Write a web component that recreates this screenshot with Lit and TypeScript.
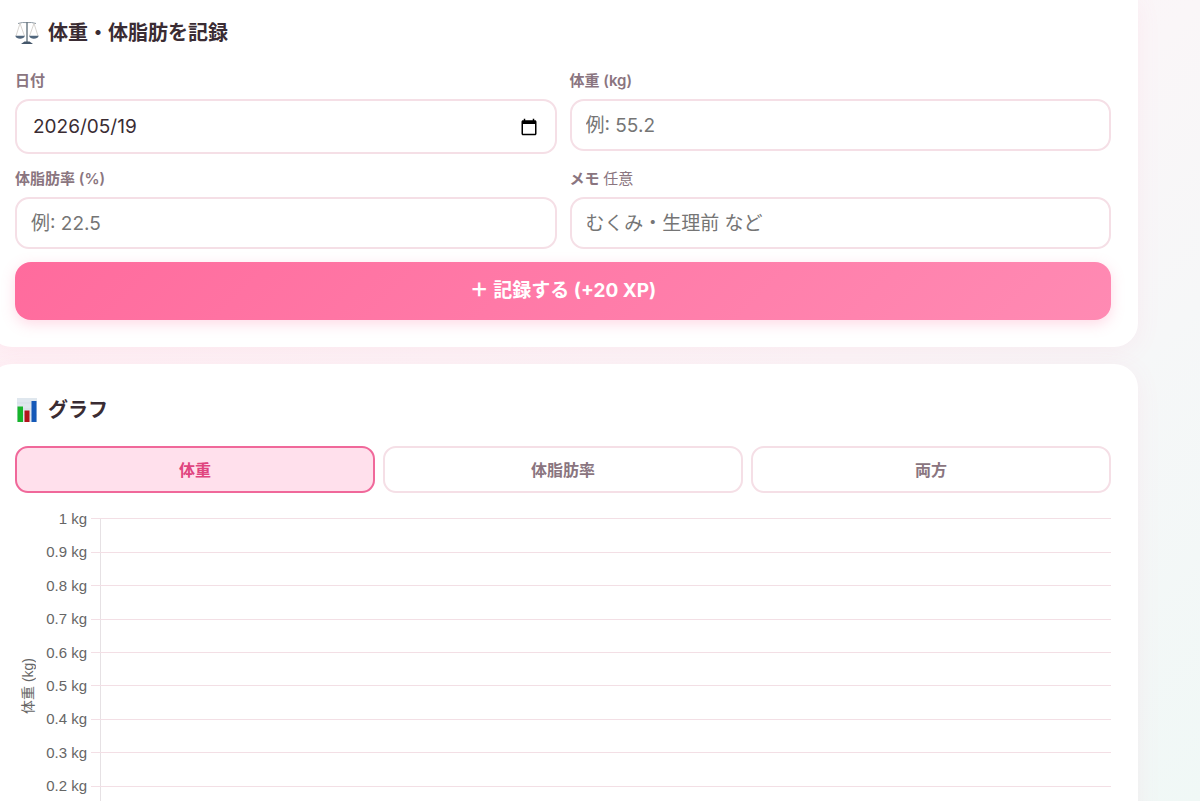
import { LitElement, html, svg, css } from "lit";
import { customElement, state } from "lit/decorators.js";

const scalesIcon = svg`
  <svg class="emoji" viewBox="0 0 24 24" fill="none" aria-hidden="true">
    <path d="M3 2.5 Q7.5 1 12 1.6 Q16.5 1 21 2.5" stroke="#8d99a3" stroke-width="1"/>
    <path d="M12 1v20" stroke="#66757f" stroke-width="1.4"/>
    <path d="M5 2.4L1 15M5 2.4L9.500 15M19 2.4L14.5 15M19 2.4L23 15" stroke="#c6c1bb" stroke-width=".7"/>
    <path d="M.3 14.8h9.600c-.6 2.200-2.500 3-4.800 3s-4.200-.8-4.800-3zM14.100 14.800h9.600c-.6 2.200-2.500 3-4.800 3s-4.200-.8-4.800-3z" fill="#52677d"/>
    <path d="M9.5 20.5h5l3.500 2.500H6z" fill="#44566a"/>
  </svg>`;

const chartIcon = svg`
  <svg class="emoji" viewBox="0 0 24 24" aria-hidden="true">
    <rect x="2" y="0" width="20" height="24" fill="#dfe7ee"/>
    <path d="M2 5h20M2 11h20M2 17h20" stroke="#cdd8e2" stroke-width=".6"/>
    <rect x="2.500" y="8.500" width="5.500" height="15.500" fill="#17b52c"/>
    <rect x="9.500" y="12.500" width="5" height="11.500" fill="#b3141c"/>
    <rect x="16.500" y="3" width="5" height="21" fill="#1559b8"/>
  </svg>`;

@customElement("app-root")
export class AppRoot extends LitElement {
  @state() private view = "weight";

  private tabs = [
    { id: "weight", label: "体重" },
    { id: "fat", label: "体脂肪率" },
    { id: "both", label: "両方" },
  ];

  private ticks = ["1", "0.9", "0.8", "0.7", "0.6", "0.5", "0.4", "0.3", "0.2"];

  static styles = css`
    :host {
      display: block;
      height: 100vh;
      overflow: hidden;
      box-sizing: border-box;
      color: #3a2c33;
      font-family: Inter, "Noto Sans CJK JP", sans-serif;
      background: linear-gradient(135deg, #fff0f5 0%, #faf6f8 60%, #f6f7f8 75%, #f0f8f6 100%);
    }
    *, *::before, *::after { box-sizing: border-box; }
    .page {
      display: flex;
      flex-direction: column;
      gap: 17px;
      margin: 0 62px 0 -12px;
    }
    .card {
      padding: 30px 27px 27px;
      background: #fff;
      border-radius: 24px;
      box-shadow: 0 4px 24px rgba(255, 107, 157, 0.08);
    }
    .entry { padding-top: 17px; border-radius: 0 0 24px 24px; }
    .title {
      display: flex;
      align-items: center;
      gap: 9px;
      margin: 0;
      font-size: 20px;
      line-height: 32px;
      font-weight: 700;
    }
    .emoji { width: 24px; height: 24px; flex: none; }
    .form {
      display: grid;
      grid-template-columns: 1fr 1fr;
      gap: 13px;
      align-items: start;
      margin-top: 20px;
    }
    .field { display: flex; flex-direction: column; gap: 6px; }
    .label { font-size: 15px; line-height: 24px; font-weight: 600; color: #8a7580; }
    .optional { font-weight: 400; }
    .input {
      width: 100%;
      height: 52px;
      padding: 0 14px;
      border: 2px solid #f5dfe6;
      border-radius: 14px;
      background: #fff;
      color: #3a2c33;
      font: 400 19px/24px Inter, "Noto Sans CJK JP", sans-serif;
      outline: none;
    }
    .input::placeholder { color: #757575; opacity: 1; }
    .date { display: flex; align-items: center; height: 55px; padding: 0 16px; }
    .date-text {
      flex: 1;
      min-width: 0;
      padding: 0;
      border: 0;
      background: none;
      color: inherit;
      font: inherit;
      outline: none;
    }
    .picker { display: flex; padding: 0; border: 0; background: none; color: #000; }
    .calendar { width: 20px; height: 18px; }
    .submit {
      grid-column: 1 / -1;
      height: 58px;
      border: 0;
      border-radius: 16px;
      background: linear-gradient(135deg, #ff6b9d, #ff8ab3);
      box-shadow: 0 4px 14px rgba(255, 107, 157, 0.25);
      color: #fff;
      font: 700 19px/24px Inter, "Noto Sans CJK JP", sans-serif;
    }
    .plus { font-weight: 900; }
    .tabs { display: grid; grid-template-columns: repeat(3, 1fr); gap: 8px; margin-top: 20px; }
    .tab {
      height: 47px;
      border: 2px solid #f5dfe6;
      border-radius: 13px;
      background: #fff;
      color: #8a7580;
      font: 600 16px/24px Inter, "Noto Sans CJK JP", sans-serif;
    }
    .tab[aria-pressed="true"] { border-color: #f0689a; background: #ffe0ec; color: #e0457f; }
    .chart {
      display: flex;
      height: 368px;
      margin-top: 9px;
      color: #666;
      font: 400 15px/20px "Liberation Sans", "Noto Sans CJK JP", sans-serif;
    }
    .axis-name {
      width: 26px;
      writing-mode: vertical-rl;
      text-orientation: sideways;
      transform: rotate(180deg);
      text-align: center;
      font-size: 14px;
      line-height: 26px;
    }
    .plot {
      flex: 1;
      display: grid;
      grid-template-rows: repeat(11, 1fr);
      background: linear-gradient(#e6e1e4, #e6e1e4) 59px 17px / 1px 334px no-repeat;
    }
    .row { display: grid; grid-template-columns: 46px 1fr; align-items: center; column-gap: 4px; }
    .tick { text-align: right; }
    .line { height: 1px; background: #f3dfe5; }
  `;

  render() {
    return html`
      <main class="page">
        <section class="card entry">
          <h2 class="title">${scalesIcon}<span>体重・体脂肪を記録</span></h2>
          <form class="form" @submit=${(e: Event) => e.preventDefault()}>
            <div class="field">
              <label class="label" for="date">日付</label>
              <div class="input date">
                <input class="date-text" id="date" type="text" value="2026/05/19" />
                <button class="picker" type="button" aria-label="日付を選択">
                  <svg class="calendar" viewBox="0 0 24 24" fill="currentColor" aria-hidden="true">
                    <path d="M20 3h-1V1h-2v2H7V1H5v2H4c-1.100 0-2 .9-2 2v16c0 1.100.9 2 2 2h16c1.100 0 2-.9 2-2V5c0-1.100-.9-2-2-2zm0 18H4V8h16v13z"/>
                  </svg>
                </button>
              </div>
            </div>
            <div class="field">
              <label class="label" for="weight">体重 (kg)</label>
              <input class="input" id="weight" type="text" inputmode="decimal" placeholder="例: 55.2" />
            </div>
            <div class="field">
              <label class="label" for="fat">体脂肪率 (%)</label>
              <input class="input" id="fat" type="text" inputmode="decimal" placeholder="例: 22.5" />
            </div>
            <div class="field">
              <label class="label" for="memo">メモ <span class="optional">任意</span></label>
              <input class="input" id="memo" type="text" placeholder="むくみ・生理前 など" />
            </div>
            <button class="submit" type="submit"><span class="plus">＋</span> 記録する (+20 XP)</button>
          </form>
        </section>
        <section class="card">
          <h2 class="title">${chartIcon}<span>グラフ</span></h2>
          <div class="tabs">
            ${this.tabs.map(
              (t) => html`<button class="tab" type="button" aria-pressed=${this.view === t.id ? "true" : "false"}
                @click=${() => (this.view = t.id)}>${t.label}</button>`
            )}
          </div>
          <div class="chart">
            <div class="axis-name">体重 (kg)</div>
            <div class="plot">
              ${this.ticks.map((t) => html`<div class="row"><span class="tick">${t} kg</span><span class="line"></span></div>`)}
            </div>
          </div>
        </section>
      </main>
    `;
  }
}
